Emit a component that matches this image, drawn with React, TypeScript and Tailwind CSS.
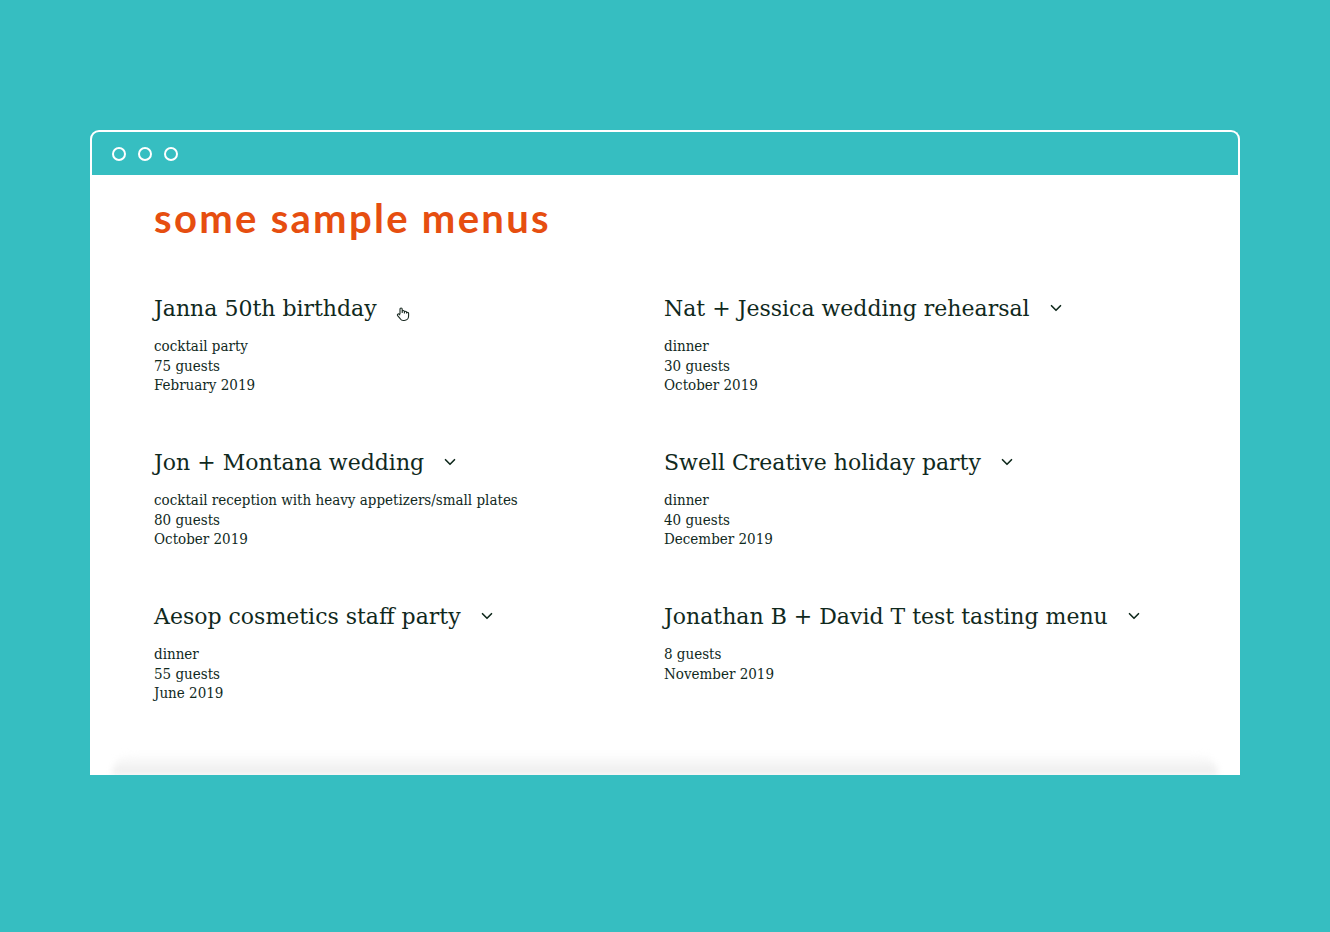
import { ChevronDown } from 'lucide-react';

type Menu = { title: string; lines: string[]; hover?: boolean };

const menus: Menu[] = [
  { title: 'Janna 50th birthday', lines: ['cocktail party', '75 guests', 'February 2019'], hover: true },
  { title: 'Nat + Jessica wedding rehearsal', lines: ['dinner', '30 guests', 'October 2019'] },
  { title: 'Jon + Montana wedding', lines: ['cocktail reception with heavy appetizers/small plates', '80 guests', 'October 2019'] },
  { title: 'Swell Creative holiday party', lines: ['dinner', '40 guests', 'December 2019'] },
  { title: 'Aesop cosmetics staff party', lines: ['dinner', '55 guests', 'June 2019'] },
  { title: 'Jonathan B + David T test tasting menu', lines: ['8 guests', 'November 2019'] },
];

function HandCursor() {
  return (
    <svg width="14" height="16" viewBox="0 0 14 16" className="mt-[12px] ml-[2px]">
      <path
        d="M4 8V3.2c0-.7.5-1.2 1.1-1.2s1.1.5 1.1 1.2V7m0-1.3c0-.7.5-1.2 1.1-1.2s1.1.5 1.1 1.2V7.5m0-1c0-.7.5-1.2 1.1-1.2s1.1.5 1.1 1.2v1m0-.2c0-.6.5-1 1-1s1 .4 1 1v2.8c0 2.4-1.8 4.4-4.3 4.4H7.3c-1.3 0-2.4-.7-3.1-1.8L1.6 9.6c-.4-.6-.2-1.3.4-1.6.5-.3 1.1-.1 1.5.4L4 9.2"
        fill="#fff"
        stroke="#1a2a22"
        strokeWidth="1.1"
        strokeLinejoin="round"
      />
    </svg>
  );
}

export default function App() {
  return (
    <div className="min-h-[932px] bg-[#36bec1] px-[90px] pt-[130px]">
      <div className="w-[1150px]">
        {/* window chrome */}
        <div className="flex h-[45px] items-center gap-[12px] rounded-t-[9px] border-[2.5px] border-b-0 border-white pl-[20px]">
          <span className="h-[14px] w-[14px] rounded-full border-[2.5px] border-white" />
          <span className="h-[14px] w-[14px] rounded-full border-[2.5px] border-white" />
          <span className="h-[14px] w-[14px] rounded-full border-[2.5px] border-white" />
        </div>

        {/* page */}
        <div className="flex h-[600px] flex-col overflow-hidden bg-white">
          <div className="px-[64px] pt-[19px]">
            <h1 className="text-[40px] font-bold leading-[48px] tracking-[2.3px] text-[#e64e10]" style={{ fontFamily: 'Lato, "Noto Sans", sans-serif' }}>
              some sample menus
            </h1>

            <div className="mt-[52px] grid grid-cols-[510px_1fr] gap-y-[36px]" style={{ fontFamily: '"DejaVu Serif", serif' }}>
              {menus.map((m) => (
                <div key={m.title} className="h-[118px] text-[#10291d]">
                  <div className="flex items-start gap-[17px]">
                    <h2 className="text-[22px] leading-[30px]">{m.title}</h2>
                    {m.hover ? <HandCursor /> : <ChevronDown className="mt-[5px]" size={18} strokeWidth={2.2} />}
                  </div>
                  <div className="mt-[13px] text-[15px] leading-[19.5px] font-stretch-semi-condensed">
                    {m.lines.map((l) => (
                      <div key={l}>{l}</div>
                    ))}
                  </div>
                </div>
              ))}
            </div>
          </div>

          <div className="mt-auto px-[22px]">
            <div className="h-[22px] rounded-t-[30px] bg-gradient-to-b from-white to-[#ececec] blur-[3px]" />
          </div>
        </div>
      </div>
    </div>
  );
}
